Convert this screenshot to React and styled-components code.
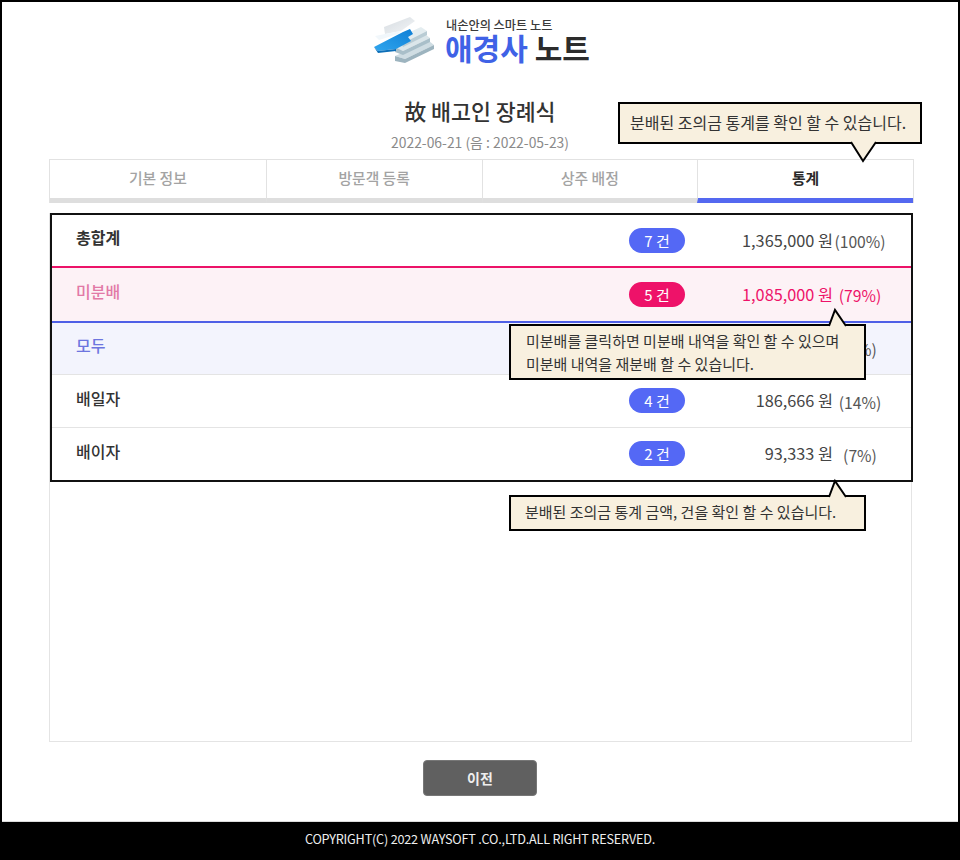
import React from "react";
import styled, { createGlobalStyle } from "styled-components";

const Global = createGlobalStyle`
  html, body { margin: 0; padding: 0; background: #fff; }
  body { font-family: "Noto Sans CJK KR", "Noto Sans", sans-serif; }
  * { box-sizing: border-box; }
`;

const Page = styled.div`
  position: relative;
  width: 960px;
  height: 860px;
  display: flex;
  flex-direction: column;
  border-top: 2px solid #000;
  border-left: 2px solid #000;
  border-right: 2px solid #000;
  overflow: hidden;
  background: #fff;
`;

const Logo = styled.div`
  height: 66px;
  padding: 8px 0 0 363px;
  display: flex;
`;

const LogoText = styled.div`
  display: flex;
  flex-direction: column;
  padding-top: 7px;
`;

const LogoSub = styled.div`
  font-size: 12.2px;
  line-height: 16px;
  font-weight: 500;
  color: #3a3a3a;
  padding-left: 1px;
`;

const LogoMain = styled.div`
  font-size: 30px;
  line-height: 28px;
  font-weight: 700;
  color: #3f62e6;
  white-space: nowrap;
  span { color: #2c2c2c; }
`;

const Title = styled.h1`
  margin: 27px 0 0;
  font-size: 21.7px;
  line-height: 32px;
  font-weight: 500;
  color: #333;
  text-align: center;
`;

const DateLine = styled.div`
  margin-top: 5px;
  font-size: 13.9px;
  line-height: 20px;
  color: #8a8a8a;
  text-align: center;
`;

const Tabs = styled.div`
  margin: 7px 0 0 47px;
  width: 865px;
  height: 44px;
  display: grid;
  grid-template-columns: repeat(4, 1fr);
  border: 1px solid #e2e2e2;
  border-bottom: 0;
`;

const Tab = styled.div`
  display: flex;
  align-items: center;
  justify-content: center;
  padding-bottom: 3px;
  font-size: 14.8px;
  font-weight: ${p => (p.$active ? 700 : 500)};
  color: ${p => (p.$active ? "#2a2a2a" : "#a3a3a3")};
  border-left: ${p => (p.$first ? "0" : "1px solid #e2e2e2")};
  border-bottom: 5px solid ${p => (p.$active ? "#5468f0" : "#dedede")};
`;

const Panel = styled.div`
  margin: 10px 0 0 47px;
  width: 863px;
  height: 529px;
  border: 1px solid #e4e4e4;
  border-top: 0;
`;

const Table = styled.div`
  width: 863px;
  height: 269px;
  border: 2px solid #111;
  display: flex;
  flex-direction: column;
`;

const tones = {
  total: { bg: "#fff", name: "#333", amount: "#444", weight: 700, line: "transparent" },
  pink: { bg: "#fdf2f6", name: "#e279a6", amount: "#ee1269", weight: 500, line: "#ec1268" },
  blue: { bg: "#f3f4fd", name: "#6d75df", amount: "#555", weight: 500, line: "#4e5fe6" },
  plain: { bg: "#fff", name: "#333", amount: "#444", weight: 500, line: "#e4e4e4" },
};

const Row = styled.div`
  height: ${p => p.$h}px;
  flex: none;
  display: grid;
  grid-template-columns: 1fr 56px 148px 54px;
  align-items: center;
  padding: 0 24px;
  background: ${p => tones[p.$tone].bg};
  border-top: ${p => p.$bw}px solid ${p => tones[p.$tone].line};
`;

const Name = styled.div`
  font-size: 16px;
  font-weight: ${p => tones[p.$tone].weight};
  color: ${p => tones[p.$tone].name};
  margin-top: -7px;
`;

const Badge = styled.div`
  width: 56px;
  height: 25px;
  margin-top: -1px;
  border-radius: 13px;
  background: ${p => (p.$pink ? "#ee1269" : "#5468f5")};
  color: #fff;
  font-size: 15px;
  display: flex;
  align-items: center;
  justify-content: center;
`;

const Amount = styled.div`
  font-size: 16.3px;
  text-align: right;
  white-space: nowrap;
  margin-top: -2px;
  color: ${p => tones[p.$tone].amount};
`;

const Pct = styled.div`
  font-size: 15.7px;
  white-space: nowrap;
  margin-top: 2px;
  display: flex;
  justify-content: center;
  color: ${p => (p.$tone === "pink" ? "#ee1269" : "#555")};
`;

const ButtonRow = styled.div`
  margin-top: 18px;
  display: flex;
  justify-content: center;
  padding-right: 1px;
`;

const PrevButton = styled.button`
  width: 114px;
  height: 36px;
  border: 1px solid #777;
  border-radius: 4px;
  background: #606060;
  color: #eee;
  font-family: inherit;
  font-size: 14px;
  font-weight: 700;
  padding: 0 0 0 1px;
`;

const Footer = styled.footer`
  margin: auto -2px 0;
  height: 39px;
  padding-bottom: 5px;
  background: #000;
  border-top: 1px solid #dcdcdc;
  color: #eee;
  font-size: 12.65px;
  letter-spacing: -0.2px;
  display: flex;
  align-items: center;
  justify-content: center;
`;

const Note = styled.div`
  position: absolute;
  left: ${p => p.$x}px;
  top: ${p => p.$y}px;
  width: ${p => p.$w}px;
  height: ${p => p.$h}px;
  padding: ${p => p.$pad};
  background: #f8f0df;
  border: 2px solid #000;
  font-size: ${p => p.$size}px;
  line-height: 22.5px;
  color: #333;
  white-space: nowrap;
`;

const Tail = styled.svg`
  position: absolute;
  display: block;
  overflow: visible;
  left: ${p => p.$x}px;
  top: ${p => p.$y}px;
`;

const rows = [
  { tone: "total", h: 51, bw: 0, name: "총합계", count: "7 건", amount: "1,365,000 원", pct: "(100%)" },
  { tone: "pink", h: 55, bw: 2, name: "미분배", count: "5 건", amount: "1,085,000 원", pct: "(79%)" },
  { tone: "blue", h: 53, bw: 2, name: "모두", count: "", amount: "", pct: "(0%)" },
  { tone: "plain", h: 53, bw: 1, name: "배일자", count: "4 건", amount: "186,666 원", pct: "(14%)" },
  { tone: "plain", h: 53, bw: 1, name: "배이자", count: "2 건", amount: "93,333 원", pct: "(7%)" },
];

const LogoMark = () => (
  <svg width="80" height="60" viewBox="0 0 80 60" style={{ flex: "none" }}>
    <defs>
      <linearGradient id="sheet" x1="0" y1="0" x2="1" y2="1">
        <stop offset="0" stopColor="#d5dbe0" />
        <stop offset="1" stopColor="#f4f6f8" />
      </linearGradient>
      <linearGradient id="blueFace" x1="0" y1="1" x2="1" y2="0">
        <stop offset="0" stopColor="#2fa6ee" />
        <stop offset="1" stopColor="#0f7fd6" />
      </linearGradient>
    </defs>
    <polygon points="30,46 64,31 69,35 40,49" fill="#cfdde3" />
    <polygon points="30,46 40,49 69,35 69,39 40,53 30,51" fill="#9db4bf" />
    <polygon points="30,37 60,24 65,28 38,41" fill="#dbe6ea" />
    <polygon points="30,37 38,41 65,28 65,32 38,45 30,42" fill="#a9bfc9" />
    <polygon points="34,27 56,17 62,21 38,33" fill="#e4edf0" />
    <polygon points="34,27 38,33 62,21 62,25 38,37" fill="#b9ccd4" />
    <polygon points="19,17 45,7 50,11 36,21 20,24" fill="url(#sheet)" />
    <polygon points="10,26 20,24 36,21 33,24 14,30" fill="#f1f7fb" />
    <polygon points="38,22 45,19 48,24 43,27 46,31 31,39 13,41 9,37" fill="url(#blueFace)" />
    <polygon points="9,37 13,41 31,39 31,41 13,43" fill="#0d6fb8" />
  </svg>
);

export default function App() {
  return (
    <>
      <Global />
      <Page>
        <Logo>
          <LogoMark />
          <LogoText>
            <LogoSub>내손안의 스마트 노트</LogoSub>
            <LogoMain>
              애경사 <span>노트</span>
            </LogoMain>
          </LogoText>
        </Logo>
        <Title>故 배고인 장례식</Title>
        <DateLine>2022-06-21 (음 : 2022-05-23)</DateLine>
        <Tabs>
          <Tab $first>기본 정보</Tab>
          <Tab>방문객 등록</Tab>
          <Tab>상주 배정</Tab>
          <Tab $active>통계</Tab>
        </Tabs>
        <Panel>
          <Table>
            {rows.map(r => (
              <Row key={r.name} $tone={r.tone} $h={r.h} $bw={r.bw}>
                <Name $tone={r.tone}>{r.name}</Name>
                {r.count ? <Badge $pink={r.tone === "pink"}>{r.count}</Badge> : <span />}
                <Amount $tone={r.tone}>{r.amount}</Amount>
                <Pct $tone={r.tone}>{r.pct}</Pct>
              </Row>
            ))}
          </Table>
        </Panel>
        <ButtonRow>
          <PrevButton>이전</PrevButton>
        </ButtonRow>
        <Footer>COPYRIGHT(C) 2022 WAYSOFT .CO.,LTD.ALL RIGHT RESERVED.</Footer>

        <Note $x={616} $y={100} $w={304} $h={42} $size={16} $pad="7px 0 0 10px">분배된 조의금 통계를 확인 할 수 있습니다.</Note>
        <Tail $x={848} $y={139} width="28" height="22">
          <polyline points="1,1 13,20 26,1" fill="#f8f0df" stroke="#000" strokeWidth="2" />
        </Tail>

        <Note $x={507} $y={322} $w={357} $h={56} $size={15} $pad="4px 0 0 15px">
          미분배를 클릭하면 미분배 내역을 확인 할 수 있으며<br />미분배 내역을 재분배 할 수 있습니다.
        </Note>
        <Tail $x={820} $y={307} width="30" height="18">
          <polyline points="7,17 13,1 24,17" fill="#f8f0df" stroke="#000" strokeWidth="2" />
        </Tail>

        <Note $x={507} $y={493} $w={357} $h={36} $size={15} $pad="4px 0 0 14px">분배된 조의금 통계 금액, 건을 확인 할 수 있습니다.</Note>
        <Tail $x={820} $y={478} width="30" height="18">
          <polyline points="7,17 13,1 24,17" fill="#f8f0df" stroke="#000" strokeWidth="2" />
        </Tail>
      </Page>
    </>
  );
}
